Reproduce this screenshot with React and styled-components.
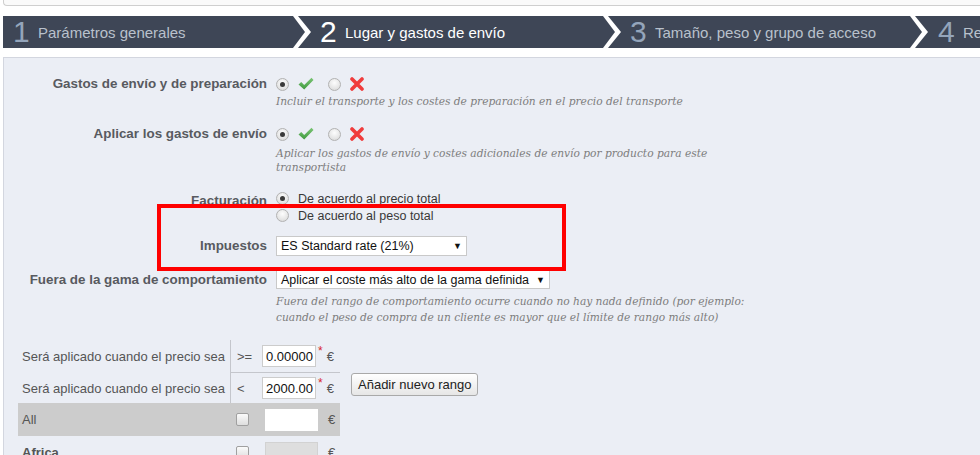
import React from 'react';
import styled, { createGlobalStyle } from 'styled-components';

const GlobalStyle = createGlobalStyle`
  html, body {
    margin: 0;
    padding: 0;
    background: #ffffff;
    font-family: "Liberation Sans", Arial, sans-serif;
    overflow: hidden;
  }
`;

const Page = styled.div`
  position: relative;
  width: 980px;
  height: 455px;
  overflow: hidden;
  padding-left: 3px;
  box-sizing: border-box;
`;

const TopBox = styled.div`
  height: 5px;
  border-left: 1px solid #cfcfcf;
  border-bottom: 1px solid #cfcfcf;
  border-bottom-left-radius: 4px;
  background: #fafafa;
`;

const StepBar = styled.div`
  display: flex;
  margin-top: 10px;
  height: 32px;
  background: #3e4656;
  overflow: hidden;
`;

const Step = styled.div`
  display: flex;
  align-items: center;
  flex-shrink: 0;
  width: ${(p) => p.$width}px;
  padding-left: ${(p) => p.$pad}px;
  box-sizing: border-box;
`;

const StepNum = styled.span`
  font-size: 30px;
  line-height: 1;
  color: ${(p) => (p.$active ? '#ffffff' : '#94a5bb')};
  margin-right: 11px;
  width: 14px;
`;

const StepLabel = styled.span`
  font-size: 15px;
  color: ${(p) => (p.$active ? '#ffffff' : '#b9c1cc')};
  white-space: nowrap;
  flex: 1;
`;

const Chevron = () => (
  <svg width="18" height="32" viewBox="0 0 18 32" style={{ flexShrink: 0 }}>
    <polygon points="0,0 5,0 18,16 5,32 0,32 12,16" fill="#ffffff" />
  </svg>
);

const Panel = styled.div`
  margin-top: 9px;
  border-top: 1px solid #d3d6df;
  border-left: 1px solid #d3d6df;
  background: #ebeef5;
  height: 400px;
  padding-top: 16px;
`;

const Row = styled.div`
  display: grid;
  grid-template-columns: 272px 1fr;
  margin-top: ${(p) => p.$mt || 0}px;
`;

const Label = styled.div`
  text-align: right;
  padding-right: 9px;
  font-size: 13.4px;
  font-weight: bold;
  color: #585a60;
  line-height: ${(p) => p.$lh || 20}px;
  white-space: nowrap;
`;

const Controls = styled.div`
  display: flex;
  flex-direction: column;
  align-items: flex-start;
`;

const SwitchLine = styled.div`
  display: flex;
  align-items: center;
  height: 20px;
`;

const Radio = styled.span`
  display: inline-block;
  width: 11px;
  height: 11px;
  border-radius: 50%;
  border: 1px solid #b2b2b2;
  background: radial-gradient(circle at 50% 35%, #fdfdfd 0%, #e6e6e6 60%, #d4d4d4 100%);
  position: relative;
  flex-shrink: 0;
  margin-left: ${(p) => p.$ml || 0}px;
  &::after {
    content: '';
    display: ${(p) => (p.$checked ? 'block' : 'none')};
    position: absolute;
    left: 3px;
    top: 3px;
    width: 5px;
    height: 5px;
    border-radius: 50%;
    background: #3a3a3a;
  }
`;

const IconSlot = styled.span`
  display: inline-flex;
  margin-left: ${(p) => p.$ml || 0}px;
`;

const Help = styled.div`
  font-family: "DejaVu Serif", Georgia, serif;
  font-style: italic;
  font-size: 10.65px;
  line-height: ${(p) => p.$lh || 14}px;
  color: #7d7d7d;
  margin-top: ${(p) => p.$mt || 0}px;
  max-width: ${(p) => p.$max || 460}px;
`;

const RadioLine = styled.label`
  display: flex;
  align-items: center;
  height: 17px;
  gap: 9px;
  font-size: 12.5px;
  color: #383838;
`;

const Select = styled.div`
  display: flex;
  align-items: center;
  justify-content: space-between;
  box-sizing: border-box;
  width: ${(p) => p.$width}px;
  height: ${(p) => p.$height || 20}px;
  background: #ffffff;
  border: 1px solid #c9c9c9;
  padding: 0 4px 0 4px;
  font-size: 12.5px;
  color: #111;
  white-space: nowrap;
`;

const Arrow = styled.span`
  font-size: 9px;
  color: #111;
`;

const RangeArea = styled.div`
  display: flex;
  align-items: flex-start;
  margin-top: 14px;
  padding-left: 14px;
`;

const RangeTable = styled.div`
  width: 322px;
  display: flex;
  flex-direction: column;
`;

const RangeRow = styled.div`
  display: grid;
  grid-template-columns: 212px 32px 78px;
  height: ${(p) => p.$h}px;
  background: ${(p) => (p.$gray ? '#cccccc' : 'transparent')};
  font-size: 13px;
  color: #555;
`;

const Cell = styled.div`
  display: flex;
  align-items: center;
  padding-left: ${(p) => p.$pl || 0}px;
  border-left: ${(p) => (p.$divider ? '1px solid #c4c6cc' : 'none')};
  border-bottom: ${(p) => (p.$bottom ? '1px solid #c4c6cc' : 'none')};
  font-weight: ${(p) => (p.$bold ? 'bold' : 'normal')};
  white-space: nowrap;
`;

const NumInput = styled.div`
  box-sizing: border-box;
  width: ${(p) => p.$w || 54}px;
  height: 22px;
  background: ${(p) => (p.$disabled ? '#dedede' : '#ffffff')};
  border: 1px solid ${(p) => (p.$disabled ? '#d2d2d2' : p.$flat ? '#ffffff' : '#cccccc')};
  font-size: 13px;
  color: #111;
  display: flex;
  align-items: center;
  justify-content: flex-end;
  padding-right: 2px;
`;

const Required = styled.span`
  color: #d9262b;
  font-size: 12px;
  margin-left: 2px;
  transform: translateY(-5px);
`;

const Euro = styled.span`
  margin-left: ${(p) => p.$ml || 6}px;
  color: #555;
`;

const Button = styled.button`
  margin-top: 33px;
  margin-left: 11px;
  height: 23px;
  padding: 0 6px;
  font-family: "Liberation Sans", Arial, sans-serif;
  font-size: 13px;
  color: #222;
  background: linear-gradient(#ffffff, #e6e6e6);
  border: 1px solid #a9a9a9;
  border-radius: 3px;
`;

const Checkbox = styled.span`
  display: inline-block;
  width: 11px;
  height: 11px;
  border: 1px solid #a0a0a0;
  border-radius: 2px;
  background: linear-gradient(#fbfbfb, #dedede);
`;

const Highlight = styled.div`
  position: absolute;
  left: 157px;
  top: 204px;
  width: 409px;
  height: 67px;
  box-sizing: border-box;
  border: 4px solid #ff0000;
  pointer-events: none;
`;

const Check = () => (
  <svg width="16" height="14" viewBox="0 0 16 14">
    <defs>
      <linearGradient id="gc" x1="0" y1="0" x2="0" y2="1">
        <stop offset="0" stopColor="#7cc576" />
        <stop offset="1" stopColor="#3e9a3e" />
      </linearGradient>
    </defs>
    <path d="M0.5 7.5 L3.2 5 L6.2 8 L13.5 0.8 L15.5 3 L6.2 12.5 Z" fill="url(#gc)" />
  </svg>
);

const Cross = () => (
  <svg width="14" height="14" viewBox="0 0 14 14">
    <path d="M2 2 L12 12 M12 2 L2 12" stroke="#f03c3c" strokeWidth="3.6" strokeLinecap="round" />
  </svg>
);

const YesNo = () => (
  <SwitchLine>
    <Radio $checked />
    <IconSlot $ml={9}>
      <Check />
    </IconSlot>
    <Radio $ml={14} />
    <IconSlot $ml={9}>
      <Cross />
    </IconSlot>
  </SwitchLine>
);

const steps = [
  { n: 1, label: 'Parámetros generales', width: 308, pad: 10 },
  { n: 2, label: 'Lugar y gastos de envío', width: 310, pad: 9 },
  { n: 3, label: 'Tamaño, peso y grupo de acceso', width: 307, pad: 9 },
  { n: 4, label: 'Resumen', width: 200, pad: 10 },
];

export default function App() {
  return (
    <>
      <GlobalStyle />
      <Page>
        <TopBox />
        <StepBar>
          {steps.map((s) => (
            <Step key={s.n} $width={s.width} $pad={s.pad}>
              <StepNum $active={s.n === 2}>{s.n}</StepNum>
              <StepLabel $active={s.n === 2}>{s.label}</StepLabel>
              {s.n < 4 && <Chevron />}
            </Step>
          ))}
        </StepBar>
        <Panel>
          <Row>
            <Label>Gastos de envío y de preparación</Label>
            <Controls>
              <YesNo />
              <Help $mt={1}>Incluir el transporte y los costes de preparación en el precio del transporte</Help>
            </Controls>
          </Row>
          <Row $mt={15}>
            <Label>Aplicar los gastos de envío</Label>
            <Controls>
              <YesNo />
              <Help $mt={3} $max={450}>
                Aplicar los gastos de envío y costes adicionales de envío por producto para este transportista
              </Help>
            </Controls>
          </Row>
          <Row $mt={15}>
            <Label $lh={22}>Facturación</Label>
            <Controls>
              <RadioLine>
                <Radio $checked />
                De acuerdo al precio total
              </RadioLine>
              <RadioLine>
                <Radio />
                De acuerdo al peso total
              </RadioLine>
            </Controls>
          </Row>
          <Row $mt={12}>
            <Label>Impuestos</Label>
            <Controls>
              <Select $width={191}>
                ES Standard rate (21%)
                <Arrow>▼</Arrow>
              </Select>
            </Controls>
          </Row>
          <Row $mt={14}>
            <Label $lh={19}>Fuera de la gama de comportamiento</Label>
            <Controls>
              <Select $width={274} $height={19}>
                Aplicar el coste más alto de la gama definida
                <Arrow>▼</Arrow>
              </Select>
              <Help $mt={5} $lh={16} $max={505}>
                Fuera del rango de comportamiento ocurre cuando no hay nada definido (por ejemplo: cuando el peso de compra de un cliente es mayor que el límite de rango más alto)
              </Help>
            </Controls>
          </Row>
          <RangeArea>
            <RangeTable>
              <RangeRow $h={33}>
                <Cell $pl={4}>Será aplicado cuando el precio sea</Cell>
                <Cell $divider $bottom $pl={6}>&gt;=</Cell>
                <Cell $bottom>
                  <NumInput>0.00000</NumInput>
                  <Required>*</Required>
                  <Euro $ml={4}>€</Euro>
                </Cell>
              </RangeRow>
              <RangeRow $h={30}>
                <Cell $pl={4}>Será aplicado cuando el precio sea</Cell>
                <Cell $divider $pl={6}>&lt;</Cell>
                <Cell>
                  <NumInput>2000.00</NumInput>
                  <Required>*</Required>
                  <Euro $ml={4}>€</Euro>
                </Cell>
              </RangeRow>
              <RangeRow $h={33} $gray>
                <Cell $pl={4}>All</Cell>
                <Cell $pl={6}>
                  <Checkbox />
                </Cell>
                <Cell $pl={3}>
                  <NumInput $w={53} $flat> </NumInput>
                  <Euro $ml={10}>€</Euro>
                </Cell>
              </RangeRow>
              <RangeRow $h={33}>
                <Cell $pl={4} $bold>Africa</Cell>
                <Cell $pl={6}>
                  <Checkbox />
                </Cell>
                <Cell $pl={3}>
                  <NumInput $w={53} $disabled> </NumInput>
                  <Euro $ml={10}>€</Euro>
                </Cell>
              </RangeRow>
            </RangeTable>
            <Button>Añadir nuevo rango</Button>
          </RangeArea>
        </Panel>
        <Highlight />
      </Page>
    </>
  );
}
